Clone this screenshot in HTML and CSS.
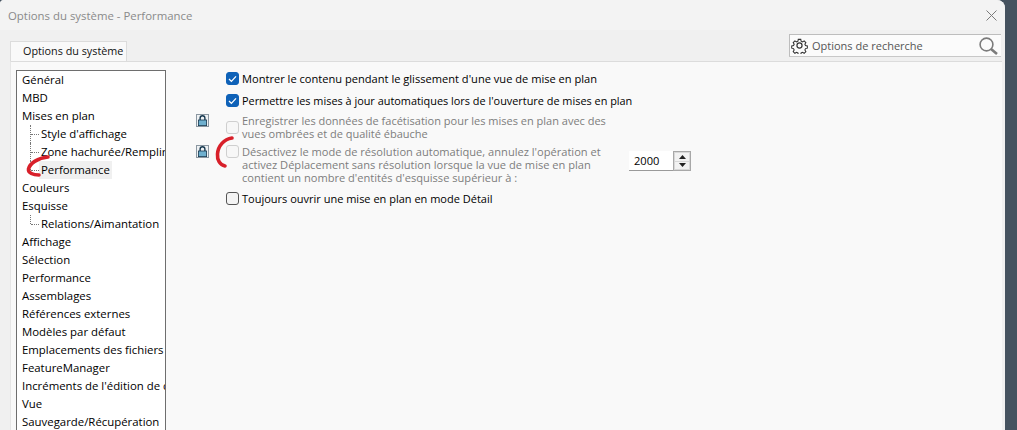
FILE: index.html
```html
<!DOCTYPE html>
<html lang="fr">
<head>
  <meta charset="UTF-8" />
  <meta name="viewport" content="width=device-width, initial-scale=1" />
  <title>Options du système - Performance</title>
  <link rel="stylesheet" href="styles.css">
</head>
<body>
  <div class="fenetre">
    <div class="titre">
      <span>Options du système - Performance</span>
      <svg class="fermer" width="11" height="11" viewBox="0 0 11 11"><path d="M.5 .5 10.5 10.5M10.5 .5 .5 10.5" stroke="#7a7a7a" stroke-width="1" fill="none"/></svg>
    </div>

    <div class="barre">
      <div class="onglet">Options du système</div>
      <div class="recherche">
        <svg class="engrenage" width="17" height="17" viewBox="0 0 24 24" fill="none" stroke="#333" stroke-width="1.7"><circle cx="12" cy="12" r="3.6"/><path d="M10 2h4l.6 3 2.3 1 2.6-1.6 2.8 2.8-1.6 2.6 1 2.2 3 .7v3.6l-3 .7-1 2.2 1.6 2.6-2.8 2.8-2.6-1.6-2.3 1-.6 3h-4l-.6-3-2.3-1-2.6 1.6-2.8-2.8 1.6-2.6-1-2.2-3-.7v-3.6l3-.7 1-2.2-1.6-2.6 2.8-2.8 2.6 1.6 2.3-1z" transform="translate(1.6 1.6) scale(.87)"/></svg>
        <span class="recherche-texte">Options de recherche</span>
        <svg class="loupe" width="19" height="18" viewBox="0 0 19 18" fill="none"><circle cx="7.5" cy="7.5" r="6.4" stroke="#7b7b7b" stroke-width="1.6"/><path d="M12 12 18 17" stroke="#7b7b7b" stroke-width="2.6"/></svg>
      </div>
    </div>

    <div class="panneau">
      <ul class="arbre">
        <li>Général</li>
        <li>MBD</li>
        <li>Mises en plan</li>
        <li class="enfant">Style d'affichage</li>
        <li class="enfant">Zone hachurée/Remplir</li>
        <li class="enfant dernier"><span class="actif">Performance</span></li>
        <li>Couleurs</li>
        <li>Esquisse</li>
        <li class="enfant dernier">Relations/Aimantation</li>
        <li>Affichage</li>
        <li>Sélection</li>
        <li>Performance</li>
        <li>Assemblages</li>
        <li>Références externes</li>
        <li>Modèles par défaut</li>
        <li>Emplacements des fichiers</li>
        <li>FeatureManager</li>
        <li>Incréments de l'édition de cotes</li>
        <li>Vue</li>
        <li>Sauvegarde/Récupération</li>
      </ul>

      <div class="options">
        <div class="ligne ligne-1">
          <span class="case cochee"><svg width="9" height="8" viewBox="0 0 9 8"><path d="M1 4 3.4 6.4 8 1.4" stroke="#fff" stroke-width="1.3" fill="none"/></svg></span>
          <span>Montrer le contenu pendant le glissement d'une vue de mise en plan</span>
        </div>
        <div class="ligne ligne-2">
          <span class="case cochee"><svg width="9" height="8" viewBox="0 0 9 8"><path d="M1 4 3.4 6.4 8 1.4" stroke="#fff" stroke-width="1.3" fill="none"/></svg></span>
          <span>Permettre les mises à jour automatiques lors de l'ouverture de mises en plan</span>
        </div>
        <div class="ligne ligne-3 inactif">
          <span class="cadenas"><svg width="11" height="11" viewBox="0 0 11 11"><path d="M3.1 5.5V3.2a2.4 2.4 0 0 1 4.8 0V5.5" fill="none" stroke="#17384f" stroke-width="1.4"/><rect x="1.4" y="5" width="8.2" height="5.6" fill="#6fb0cf" stroke="#17384f" stroke-width=".8"/></svg></span>
          <span class="case"></span>
          <span>Enregistrer les données de facétisation pour les mises en plan avec des<br>vues ombrées et de qualité ébauche</span>
        </div>
        <div class="ligne ligne-4 inactif">
          <span class="cadenas"><svg width="11" height="11" viewBox="0 0 11 11"><path d="M3.1 5.5V3.2a2.4 2.4 0 0 1 4.8 0V5.5" fill="none" stroke="#17384f" stroke-width="1.4"/><rect x="1.4" y="5" width="8.2" height="5.6" fill="#6fb0cf" stroke="#17384f" stroke-width=".8"/></svg></span>
          <span class="case"></span>
          <span class="texte-long">Désactivez le mode de résolution automatique, annulez l'opération et<br>activez Déplacement sans résolution lorsque la vue de mise en plan<br>contient un nombre d'entités d'esquisse supérieur à :</span>
          <div class="compteur">
            <span class="valeur">2000</span>
            <span class="fleches">
              <span class="fleche"><svg width="7" height="4" viewBox="0 0 7 4"><path d="M3.5 0 7 4H0z" fill="#222"/></svg></span>
              <span class="fleche"><svg width="7" height="4" viewBox="0 0 7 4"><path d="M0 0h7L3.5 4z" fill="#222"/></svg></span>
            </span>
          </div>
        </div>
        <div class="ligne ligne-5">
          <span class="case vide"></span>
          <span>Toujours ouvrir une mise en plan en mode Détail</span>
        </div>
      </div>
    </div>

    <!-- traits rouges dessines a la main par dessus la capture -->
    <svg class="annotation" width="1005" height="430" viewBox="0 0 1005 430" fill="none">
      <path d="M48 157C38 158 30 163 28.500 169C28 173 33 175 39 175" stroke="#d8202a" stroke-width="3.600" stroke-linecap="round"/>
      <path d="M232 138C224 139 218 146 217.500 154C217 160 220 165 225 166" stroke="#d8202a" stroke-width="3.600" stroke-linecap="round"/>
    </svg>
  </div>
</body>
</html>
```

FILE: styles.css
```css
html,
body {
  margin: 0;
  height: 100%;
  overflow: hidden;
}

body {
  background: #45525f;
  font-family: "Open Sans", "Noto Sans", Arial, sans-serif;
  font-size: 11.1px;
  color: #000;
}

.fenetre {
  position: relative;
  width: 1005px;
  height: 430px;
  background: #f0f0f0;
  border-top-left-radius: 4px;
  border-top-right-radius: 8px;
  overflow: hidden;
}

.titre {
  display: flex;
  justify-content: space-between;
  align-items: center;
  height: 30px;
  padding: 0 8px 0 8px;
  background: #f3f3f3;
  font-size: 11.4px;
  color: #8a8a8a;
}

.barre {
  display: flex;
  justify-content: space-between;
  align-items: flex-end;
  height: 31px;
  padding: 0 4px 0 10px;
  background: #f0f0f0;
}

.onglet {
  height: 19px;
  padding: 0 3px 0 12px;
  line-height: 18px;
  background: #f9f9f9;
  border: 1px solid #dcdcdc;
  border-bottom: none;
  font-size: 10.8px;
  color: #111;
}

.recherche {
  display: flex;
  align-items: center;
  align-self: flex-start;
  box-sizing: border-box;
  width: 212px;
  height: 23px;
  margin-top: 4px;
  padding-left: 1px;
  background: #fbfbfb;
  border: 1px solid #bdbdbd;
  border-right: none;
  border-bottom-color: #c8c8c8;
}

.engrenage {
  flex: none;
}

.recherche-texte {
  margin-left: 4px;
  font-size: 11px;
  color: #555;
}

.loupe {
  margin-left: auto;
  margin-right: 3px;
}

.panneau {
  display: flex;
  height: 369px;
  margin: 0 3px 0 10px;
  padding: 8px 0 0 6px;
  box-sizing: border-box;
  background: #f9f9f9;
  border-top: 1px solid #dcdcdc;
  border-left: 1px solid #e6e6e6;
}

.arbre {
  flex: none;
  box-sizing: border-box;
  width: 150px;
  height: 400px;
  margin: 0 0 0 -1px;
  padding: 0 0 0 5px;
  list-style: none;
  background: #fff;
  border: 1px solid #6e6e6e;
  overflow: hidden;
  font-size: 11.4px;
}

.arbre li {
  position: relative;
  height: 18px;
  line-height: 17px;
  white-space: nowrap;
}

.arbre .enfant {
  padding-left: 19px;
}

.arbre .enfant::before {
  content: "";
  position: absolute;
  left: 8px;
  top: 0;
  bottom: 0;
  border-left: 1px dotted #777;
}

.arbre .enfant.dernier::before {
  bottom: 9px;
}

.arbre .enfant::after {
  content: "";
  position: absolute;
  left: 9px;
  top: 9px;
  width: 8px;
  border-top: 1px dotted #777;
}

.actif {
  display: block;
  width: fit-content;
  height: 18px;
  margin-left: -2px;
  padding: 0 2px;
  background: #f0f0f0;
}

.options {
  flex: 1;
  padding: 2px 0 0 60px;
}

.ligne {
  position: relative;
  display: flex;
  line-height: 13px;
  white-space: nowrap;
}

.ligne-2 {
  margin-top: 9px;
  font-size: 10.9px;
}

.ligne-3 {
  margin-top: 7px;
  font-size: 11px;
}

.ligne-3 .case {
  align-self: center;
}

.ligne-4 {
  margin-top: 5px;
}

.ligne-5 {
  margin-top: 8px;
  font-size: 11px;
}

.inactif {
  color: #7d7d7d;
}

.case {
  flex: none;
  display: flex;
  align-items: center;
  justify-content: center;
  box-sizing: border-box;
  width: 13px;
  height: 13px;
  margin-right: 3px;
  background: #f7f7f7;
  border: 1px solid #cfcfcf;
  border-radius: 3px;
}

.case.cochee {
  background: #0f62b8;
  border-color: #0f62b8;
}

.case.vide {
  background: #f4f4f4;
  border-color: #555;
}

.cadenas {
  position: absolute;
  left: -30px;
  top: 0;
  display: flex;
  align-items: center;
  justify-content: center;
  box-sizing: border-box;
  width: 13px;
  height: 13px;
  background: #eef1f3;
  border: 1px solid #8b97a1;
}

.compteur {
  position: absolute;
  left: 403px;
  top: 6px;
  display: flex;
  box-sizing: border-box;
  width: 62px;
  height: 20px;
  background: #fff;
  border-bottom: 1px solid #9a9a9a;
  color: #000;
}

.valeur {
  flex: 1;
  padding-left: 5px;
  line-height: 19px;
}

.fleches {
  display: flex;
  flex-direction: column;
  gap: 1px;
  box-sizing: border-box;
  width: 18px;
  height: 20px;
  padding: 1px;
  background: #d8d8d8;
  border: 1px solid #a8a8a8;
}

.fleche {
  flex: 1;
  display: flex;
  align-items: center;
  justify-content: center;
  background: #f2f2f2;
}

.annotation {
  position: absolute;
  left: 0;
  top: 0;
  pointer-events: none;
}
```
